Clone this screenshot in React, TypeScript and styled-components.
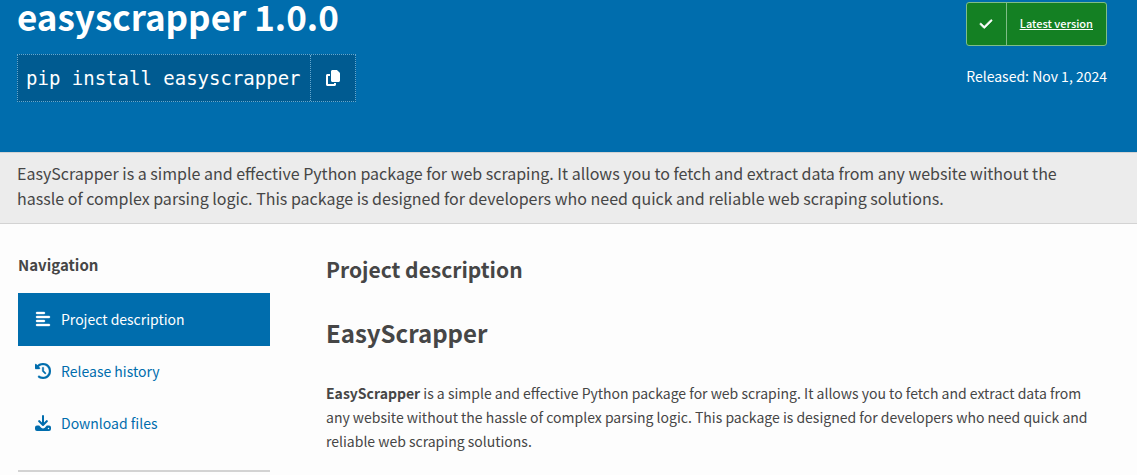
import React from "react";
import styled, { createGlobalStyle } from "styled-components";
import { FaCopy, FaAlignLeft, FaClockRotateLeft, FaCheck } from "react-icons/fa6";

const sans = `"Noto Sans CJK SC", "Noto Sans", sans-serif`;
const mono = `"DejaVu Sans Mono", "Liberation Mono", monospace`;
const blue = "#006dad";

const GlobalStyle = createGlobalStyle`
  * { box-sizing: border-box; }
  body {
    margin: 0;
    background: #fdfdfd;
    color: #464646;
    font-family: ${sans};
    font-size: 14px;
    line-height: 24px;
  }
  h1, h2, h3, p, ul { margin: 0; padding: 0; }
`;

const Banner = styled.header`
  display: flex;
  justify-content: space-between;
  align-items: flex-start;
  padding: 0 30px 50px 17px;
  background: ${blue};
  color: #fff;
`;

const PackageTitle = styled.h1`
  font-size: 35px;
  font-weight: 700;
  line-height: 32px;
  margin-bottom: 22px;
`;

const Install = styled.div`
  display: inline-flex;
  height: 48px;
  border: 1px dotted #66a7ce;
  background: #005b91;
`;

const Command = styled.code`
  padding: 0 9px 0 8px;
  font-family: ${mono};
  font-size: 19px;
  line-height: 46px;
  white-space: nowrap;
`;

const CopyButton = styled.button`
  display: flex;
  align-items: center;
  justify-content: center;
  width: 45px;
  padding: 0;
  border: 0;
  border-left: 1px dotted #66a7ce;
  background: transparent;
  color: #fff;
  font-size: 16px;
  cursor: pointer;
`;

const Release = styled.div`
  display: flex;
  flex-direction: column;
  align-items: flex-end;
  gap: 18px;
  padding-top: 2px;
`;

const VersionBadge = styled.a`
  display: flex;
  height: 44px;
  border: 1px solid #7fbd87;
  border-radius: 3px;
  background: #148023;
  color: #fff;
  font-size: 11px;
  font-weight: 500;
  line-height: 40px;
`;

const BadgeIcon = styled.span`
  display: flex;
  align-items: center;
  justify-content: center;
  width: 40px;
  border-right: 1px solid #7fbd87;
  font-size: 14px;
  svg { stroke: currentColor; stroke-width: 24; }
`;

const BadgeText = styled.span`
  padding: 0 13px;
  text-decoration: underline;
`;

const Summary = styled.section`
  padding: 8px 80px 12px 17px;
  border-top: 1px solid #d3d3d3;
  border-bottom: 1px solid #d3d3d3;
  background: #ececec;
  font-size: 16px;
  line-height: 25px;
`;

const Columns = styled.div`
  display: flex;
  gap: 56px;
  padding: 29px 30px 0 18px;
`;

const Sidebar = styled.nav`
  flex: 0 0 252px;
  padding-bottom: 20px;
  border-bottom: 2px solid #d3d3d3;
`;

const SidebarTitle = styled.h3`
  font-size: 15px;
  font-weight: 700;
  line-height: 24px;
  margin-bottom: 16px;
`;

const TabList = styled.ul`
  list-style: none;
`;

const Tab = styled.a<{ $active?: boolean }>`
  display: flex;
  align-items: center;
  gap: 10px;
  height: ${(p) => (p.$active ? 53 : 52)}px;
  padding: 0 17px 2px;
  background: ${(p) => (p.$active ? blue : "transparent")};
  color: ${(p) => (p.$active ? "#fff" : blue)};
  font-size: 14px;
  text-decoration: none;
  svg { width: 16px; height: 16px; stroke: currentColor; }
`;

const Content = styled.main`
  flex: 1;
  min-width: 0;
  padding: 1px 8px 0 0;
`;

const SectionTitle = styled.h2`
  font-size: 21px;
  font-weight: 700;
  line-height: 30px;
  margin-bottom: 31px;
`;

const ReadmeTitle = styled.h1`
  font-size: 24px;
  font-weight: 700;
  line-height: 36px;
  margin-bottom: 30px;
`;

const Paragraph = styled.p`
  font-size: 14px;
  line-height: 24px;
  strong { font-weight: 700; }
`;

const AlignIcon = styled(FaAlignLeft)`
  stroke-width: 12;
`;

const HistoryIcon = styled(FaClockRotateLeft)`
  stroke-width: 12;
`;

const DownloadIcon = () => (
  <svg viewBox="0 0 16 16" fill="currentColor" strokeWidth="0" aria-hidden="true">
    <path d="M7 1a1 1 0 0 1 2 0v6.600l2.300-2.300a1 1 0 0 1 1.400 1.400l-4 4a1 1 0 0 1-1.400 0l-4-4a1 1 0 0 1 1.400-1.400L7 7.600z" />
    <path d="M2 10.500h2.200l2 2.200a2.700 2.700 0 0 0 3.600 0l2-2.200H14a2 2 0 0 1 2 2V14a2 2 0 0 1-2 2H2a2 2 0 0 1-2-2v-1.500a2 2 0 0 1 2-2zM13.500 12.750a.75.75 0 1 0 0 1.500.75.75 0 0 0 0-1.500z" fillRule="evenodd" />
  </svg>
);

export default function App() {
  return (
    <>
      <GlobalStyle />
      <Banner>
        <div>
          <PackageTitle>easyscrapper 1.0.0</PackageTitle>
          <Install>
            <Command>pip install easyscrapper</Command>
            <CopyButton type="button" aria-label="Copy to clipboard"><FaCopy /></CopyButton>
          </Install>
        </div>
        <Release>
          <VersionBadge href="#latest">
            <BadgeIcon><FaCheck /></BadgeIcon>
            <BadgeText>Latest version</BadgeText>
          </VersionBadge>
          <p>Released: <time dateTime="2024-11-01">Nov 1, 2024</time></p>
        </Release>
      </Banner>
      <Summary>
        <p>
          EasyScrapper is a simple and effective Python package for web scraping. It allows you to fetch and
          extract data from any website without the hassle of complex parsing logic. This package is designed
          for developers who need quick and reliable web scraping solutions.
        </p>
      </Summary>
      <Columns>
        <Sidebar aria-label="Navigation">
          <SidebarTitle>Navigation</SidebarTitle>
          <TabList>
            <li><Tab href="#description" $active><AlignIcon />Project description</Tab></li>
            <li><Tab href="#history"><HistoryIcon />Release history</Tab></li>
            <li><Tab href="#files"><DownloadIcon />Download files</Tab></li>
          </TabList>
        </Sidebar>
        <Content>
          <SectionTitle>Project description</SectionTitle>
          <ReadmeTitle>EasyScrapper</ReadmeTitle>
          <Paragraph>
            <strong>EasyScrapper</strong> is a simple and effective Python package for web scraping. It allows
            you to fetch and extract data from any website without the hassle of complex parsing logic. This
            package is designed for developers who need quick and reliable web scraping solutions.
          </Paragraph>
        </Content>
      </Columns>
    </>
  );
}
